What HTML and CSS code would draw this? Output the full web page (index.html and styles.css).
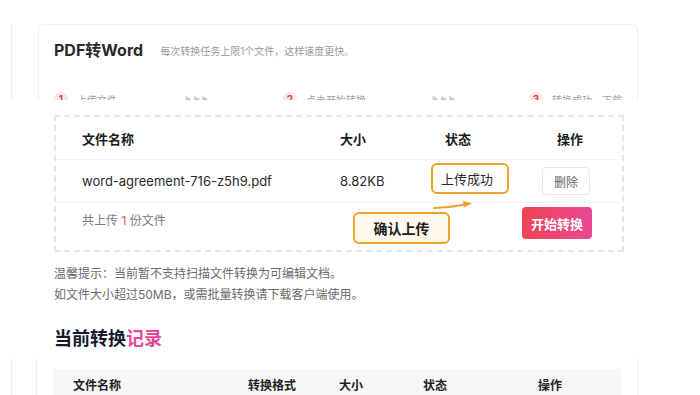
FILE: index.html
```html
<!DOCTYPE html>
<html lang="zh">
<head>
<meta charset="utf-8">
<title>PDF转Word</title>
<link rel="stylesheet" href="styles.css">
</head>
<body>
<div class="bg-top">
  <div class="side"></div>
  <div class="card">
    <div class="title-row">
      <h1 class="title">PDF转Word</h1>
      <span class="subtitle">每次转换任务上限1个文件，这样速度更快。</span>
    </div>
    <div class="steps">
      <div class="step step-1"><span class="num">1</span><span class="step-text">上传文件</span></div>
      <div class="arrows arrows-1">▶ ▶ ▶</div>
      <div class="step step-2"><span class="num">2</span><span class="step-text">点击开始转换</span></div>
      <div class="arrows arrows-2">▶ ▶ ▶</div>
      <div class="step step-3"><span class="num">3</span><span class="step-text">转换成功，下载</span></div>
    </div>
  </div>
</div>

<div class="overlay">
  <div class="upload-box">
    <div class="row head">
      <div class="c-name">文件名称</div>
      <div class="c-size">大小</div>
      <div class="c-state">状态</div>
      <div class="c-op">操作</div>
    </div>
    <div class="row data">
      <div class="c-name">word-agreement-716-z5h9.pdf</div>
      <div class="c-size">8.82KB</div>
      <div class="c-state"><span class="status">上传成功</span></div>
      <div class="c-op"><button class="btn-del">删除</button></div>
    </div>
    <div class="footer">
      <div class="count">共上传 <span class="red">1</span> 份文件</div>
      <svg class="pointer" width="44" height="12" viewBox="0 0 44 12">
        <path d="M2 10 Q 18 9.5 34 6.5" fill="none" stroke="#eda12a" stroke-width="1.8" stroke-linecap="round"/>
        <path d="M31 3 L40 5.2 L32 9.6 Z" fill="#eda12a"/>
      </svg>
      <div class="callout">确认上传</div>
      <button class="btn-start">开始转换</button>
    </div>
  </div>
  <p class="hint">温馨提示：当前暂不支持扫描文件转换为可编辑文档。<br>如文件大小超过50MB，或需批量转换请下载客户端使用。</p>
  <h2 class="records-title">当前转换<span class="pink">记录</span></h2>
</div>

<div class="bg-bottom">
  <div class="side"></div>
  <div class="card-bottom">
    <div class="rec-head">
      <div class="r-name">文件名称</div>
      <div class="r-fmt">转换格式</div>
      <div class="r-size">大小</div>
      <div class="r-state">状态</div>
      <div class="r-op">操作</div>
    </div>
  </div>
</div>
</body>
</html>
```

FILE: styles.css
```css
* { box-sizing: border-box; }
html, body { margin: 0; padding: 0; background: #fff; }
body {
  width: 700px;
  height: 395px;
  overflow: hidden;
  font-family: "Inter", "Noto Sans CJK SC", sans-serif;
  color: #222;
}

/* ---------- background page, top ---------- */
.bg-top {
  display: flex;
  height: 100px;
  padding-top: 24px;
  overflow: hidden;
}
.side {
  width: 12px;
  border-right: 1px solid #eeeeee;
  flex: none;
}
.card {
  margin-left: 26px;
  width: 600px;
  height: 120px;
  border: 1px solid #efefef;
  border-radius: 6px;
  padding: 14px 15px 0 15px;
  flex: none;
}
.title-row {
  display: flex;
  align-items: center;
  height: 22px;
}
.title {
  margin: 0;
  font-size: 16px;
  font-weight: 700;
  color: #2a2a2a;
  line-height: 22px;
}
.subtitle {
  margin-left: 17px;
  font-size: 10px;
  color: #9a9a9a;
}
.steps {
  display: flex;
  align-items: center;
  margin-top: 30px;
  height: 16px;
}
.step { display: flex; align-items: center; flex: none; }
.step-1 { width: 131px; }
.step-2 { width: 149px; }
.num {
  width: 14px;
  height: 14px;
  border-radius: 50%;
  background: #fde5e2;
  color: #d8483f;
  font-size: 10px;
  font-weight: 700;
  display: flex;
  align-items: center;
  justify-content: center;
  flex: none;
}
.step-text {
  margin-left: 9px;
  font-size: 10px;
  color: #a0a0a0;
}
.arrows {
  font-size: 7px;
  color: #c8c8c8;
  flex: none;
}
.arrows-1 { width: 98px; }
.arrows-2 { width: 97px; }

/* ---------- overlay ---------- */
.overlay {
  height: 258px;
  background: #fff;
  padding: 15px 0 0 54px;
}
.upload-box {
  width: 570px;
  border: 2px dashed #f1e0e3;
  border-radius: 2px;
}
.row {
  display: grid;
  grid-template-columns: 258px 91px 100px 1fr;
  padding-left: 26px;
  align-items: center;
  font-size: 13px;
}
.head {
  height: 43px;
  border-bottom: 1px solid #f3f4f6;
  font-weight: 700;
  color: #1c1c1c;
}
.head .c-state { padding-left: 14px; }
.head .c-op { padding-left: 26px; }
.data {
  height: 43px;
  border-bottom: 1px solid #f3f4f6;
  color: #2a2a2a;
}
.status {
  display: inline-flex;
  align-items: center;
  height: 31px;
  width: 78px;
  padding-left: 8px;
  border: 2px solid #eea42a;
  border-radius: 6px;
  margin-top: -6px;
  font-size: 13px;
  color: #2a2a2a;
}
.btn-del {
  margin-left: 11px;
  width: 48px;
  height: 28px;
  border: 1px solid #e8e8e8;
  border-radius: 4px;
  background: #fff;
  color: #666;
  font-family: inherit;
  font-size: 12px;
  padding: 0;
}
.footer {
  position: relative;
  display: flex;
  justify-content: space-between;
  align-items: flex-start;
  height: 47px;
  padding-left: 26px;
  padding-right: 30px;
}
.count {
  margin-top: 8px;
  line-height: 20px;
  font-size: 12px;
  color: #7a7a7a;
}
.red { color: #e0564e; }
.btn-start {
  margin-top: 4px;
  width: 70px;
  height: 32px;
  border: none;
  border-radius: 4px;
  background: linear-gradient(90deg, #ee4453, #e84995);
  color: #fff;
  font-family: inherit;
  font-size: 13px;
  font-weight: 700;
  padding: 0;
}
.pointer {
  position: absolute;
  left: 376px;
  top: -5px;
}
.callout {
  position: absolute;
  left: 297px;
  top: 9px;
  width: 97px;
  height: 32px;
  border: 2px solid #eea42a;
  border-radius: 6px;
  background: #fff9ee;
  display: flex;
  align-items: center;
  justify-content: center;
  font-size: 14px;
  font-weight: 700;
  color: #1e1e1e;
}
.hint {
  margin: 11px 0 0 0;
  font-size: 12px;
  line-height: 21px;
  color: #6a6a6a;
}
.records-title {
  margin: 21px 0 0 0;
  font-size: 18px;
  line-height: 26px;
  font-weight: 700;
  color: #151a2e;
}
.pink { color: #e6479a; }

/* ---------- background page, bottom ---------- */
.bg-bottom {
  display: flex;
  height: 37px;
}
.card-bottom {
  margin-left: 24px;
  width: 602px;
  border-left: 1px solid #efefef;
  border-right: 1px solid #efefef;
  padding: 11px 15px 0 16px;
  flex: none;
}
.rec-head {
  display: grid;
  grid-template-columns: 175px 91px 84px 115px 1fr;
  align-items: center;
  height: 30px;
  width: 568px;
  padding-left: 20px;
  background: #f7f7f7;
  font-size: 12px;
  font-weight: 700;
  color: #222;
}
```
